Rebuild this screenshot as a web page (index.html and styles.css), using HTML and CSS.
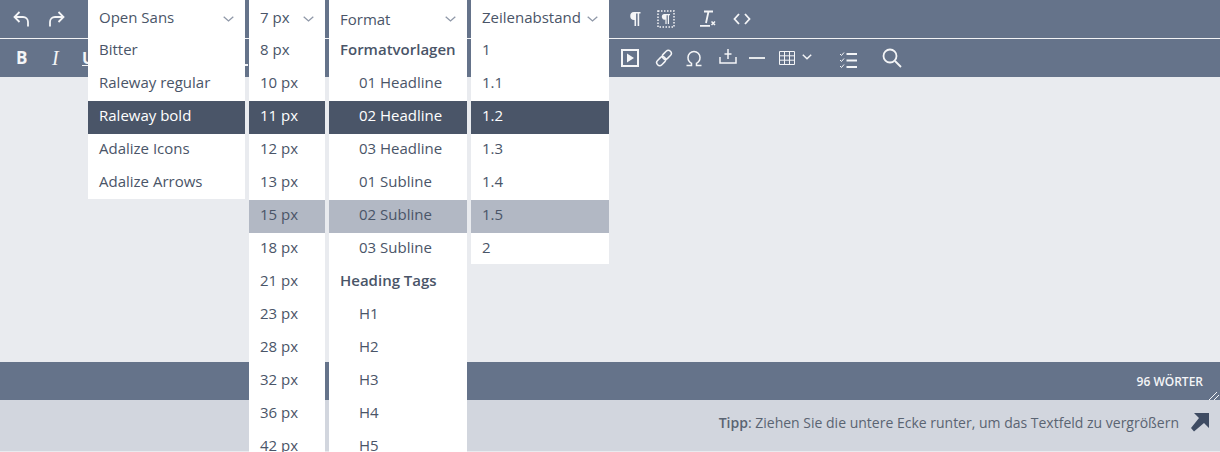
FILE: index.html
```html
<!DOCTYPE html>
<html lang="de">
<head>
<meta charset="utf-8">
<title>Editor</title>
<link rel="stylesheet" href="styles.css">
</head>
<body>
<div class="editor">
  <div class="toolbar row-one">
    <svg class="ico undo" viewBox="0 0 18 18"><path d="M7.500 2 2.500 7l5 5M2.500 7h8.500a5 5 0 0 1 5 5v4.500"/></svg>
    <svg class="ico redo" viewBox="0 0 18 18"><path d="M10.500 2l5 5-5 5M15.500 7H7a5 5 0 0 0-5 5v4.500"/></svg>
    <svg class="ico pilcrow" viewBox="0 0 12 14"><path class="solid" d="M5 0h6.500v1.600h-1.300V14H8.600V1.600H7.100V14H5.500V8A4 4 0 0 1 5 0z"/></svg>
    <svg class="ico blocks" viewBox="0 0 18 18"><rect class="dots" x="1" y="1" width="16" height="16"/><path class="solid" d="M7 4h6v1.200h-1V14h-1.200V5.200H9.600V14H8.400V9.500A2.800 2.800 0 0 1 7 4z"/></svg>
    <svg class="ico clear" viewBox="0 0 16 18"><path d="M4 1.500h9M8.500 1.500 6 13M0 15.800h10"/><path class="thin" d="m11.500 11.500 3.500 3.500m0-3.500-3.500 3.500"/></svg>
    <svg class="ico code" viewBox="0 0 18 12"><path d="M6 1 1.500 6 6 11M12 1l4.500 5L12 11"/></svg>
  </div>
  <div class="toolbar row-two">
    <span class="glyph bold">B</span>
    <span class="glyph italic">I</span>
    <span class="glyph under">U</span>
    <span class="notch"></span>
    <svg class="ico play" viewBox="0 0 18 18"><rect class="box" x="1" y="1" width="16" height="16"/><path class="solid" d="M6 4.500 13 9l-7 4.500z"/></svg>
    <svg class="ico link" viewBox="0 0 18 18"><rect class="thin" x="7" y="2.800" width="10" height="6" rx="3" transform="rotate(-45 12 6)"/><rect class="thin" x="1" y="9.200" width="10" height="6" rx="3" transform="rotate(-45 6 12)"/></svg>
    <svg class="ico omega" viewBox="0 0 18 18"><path class="thin" d="M1.500 16.500h5v-2.200A6.500 6.500 0 0 1 3 8.500a6 6 0 0 1 12 0 6.500 6.500 0 0 1-3.500 5.800v2.200h5"/></svg>
    <svg class="ico upload" viewBox="0 0 18 18"><path class="thin" d="M1 8v6h16V8M9 0v10M5.500 5h7"/></svg>
    <svg class="ico rule" viewBox="0 0 16 4"><path d="M0 2h16"/></svg>
    <svg class="ico table" viewBox="0 0 16 14"><path class="hair" d="M.5.500h15v13H.500zM.5 4.800h15M.5 9.200h15M5.500.5v13M10.500.5v13"/></svg>
    <svg class="ico tchev" viewBox="0 0 10 6"><path class="thin" d="m.8.800 4.200 4 4.200-4"/></svg>
    <svg class="ico check" viewBox="0 0 18 18"><path class="hair" d="m1 3 1.500 1.500L5 1.500M1 9l1.500 1.500L5 7.500M1 15l1.500 1.500L5 13.500"/><path d="M7.500 3H18M7.500 9.500H18M7.500 16H18"/></svg>
    <svg class="ico search" viewBox="0 0 20 20"><circle cx="8" cy="8" r="6.500"/><path d="m13 13 6 6"/></svg>
  </div>
  <div class="canvas"></div>
  <div class="status">
    <span class="words">96 WÖRTER</span>
    <svg class="grip" viewBox="0 0 10 8"><path d="M0 8 8 0M5 8l5-5"/></svg>
  </div>
  <div class="tip">
    <span class="tip-text"><b>Tipp</b>: Ziehen Sie die untere Ecke runter, um das Textfeld zu vergrößern</span>
    <svg class="arrow" viewBox="0 0 19 19"><path d="M3 0H18V15L13 10 3 18.500 0 15 8 5z"/></svg>
  </div>

  <div class="menus">
    <div class="menu m-font">
      <div class="head"><span>Open Sans</span><svg class="chev" viewBox="0 0 11 6"><path d="m.7.700 4.800 4.300L10.300.7"/></svg></div>
      <div class="item">Bitter</div>
      <div class="item">Raleway regular</div>
      <div class="item on">Raleway bold</div>
      <div class="item">Adalize Icons</div>
      <div class="item">Adalize Arrows</div>
    </div>
    <div class="menu m-size">
      <div class="head"><span>7 px</span><svg class="chev" viewBox="0 0 11 6"><path d="m.7.700 4.800 4.300L10.300.7"/></svg></div>
      <div class="item">8 px</div>
      <div class="item">10 px</div>
      <div class="item on">11 px</div>
      <div class="item">12 px</div>
      <div class="item">13 px</div>
      <div class="item hover">15 px</div>
      <div class="item">18 px</div>
      <div class="item">21 px</div>
      <div class="item">23 px</div>
      <div class="item">28 px</div>
      <div class="item">32 px</div>
      <div class="item">36 px</div>
      <div class="item">42 px</div>
    </div>
    <div class="menu m-format">
      <div class="head low"><span>Format</span><svg class="chev" viewBox="0 0 11 6"><path d="m.7.700 4.800 4.300L10.300.7"/></svg></div>
      <div class="item title">Formatvorlagen</div>
      <div class="item sub">01 Headline</div>
      <div class="item sub on">02 Headline</div>
      <div class="item sub">03 Headline</div>
      <div class="item sub">01 Subline</div>
      <div class="item sub hover">02 Subline</div>
      <div class="item sub">03 Subline</div>
      <div class="item title">Heading Tags</div>
      <div class="item sub">H1</div>
      <div class="item sub">H2</div>
      <div class="item sub">H3</div>
      <div class="item sub">H4</div>
      <div class="item sub">H5</div>
    </div>
    <div class="menu m-line">
      <div class="head"><span>Zeilenabstand</span><svg class="chev" viewBox="0 0 11 6"><path d="m.7.700 4.800 4.300L10.300.7"/></svg></div>
      <div class="item">1</div>
      <div class="item">1.1</div>
      <div class="item on">1.2</div>
      <div class="item">1.3</div>
      <div class="item">1.4</div>
      <div class="item hover">1.5</div>
      <div class="item">2</div>
    </div>
  </div>
</div>
</body>
</html>
```
FILE: styles.css
```css
* { box-sizing: border-box; }
html, body { margin: 0; padding: 0; overflow: hidden; }
body { font-family: "Open Sans", sans-serif; font-size: 15px; color: #4a5568; }

.editor { position: relative; width: 1220px; height: 452px; overflow: hidden; display: flex; flex-direction: column; background: #e9ebef; }

.toolbar { display: flex; align-items: center; background: #65738a; color: #fff; flex: none; }
.row-one { height: 38px; padding-bottom: 1px; }
.row-two { height: 39px; border-top: 1px solid #f2f3f5; }

.ico { display: block; flex: none; fill: none; stroke: #f4f5f7; stroke-width: 1.8; }
.ico .solid { fill: #f4f5f7; stroke: none; }
.ico .thin { stroke-width: 1.500; }
.ico .hair { stroke-width: 1; }
.ico .dots { stroke-width: 1.500; stroke-dasharray: 1.500 1.500; }
.ico .box { stroke-width: 2; }

.undo { width: 18px; height: 18px; margin-left: 12px; }
.redo { width: 18px; height: 18px; margin-left: 18px; }
.pilcrow { width: 12px; height: 14px; margin-left: 563px; }
.blocks { width: 18px; height: 18px; margin-left: 16px; }
.clear { width: 16px; height: 18px; margin-left: 25px; }
.code { width: 18px; height: 12px; margin-left: 17px; }

.glyph { display: block; flex: none; color: #f4f5f7; line-height: 20px; }
.bold { width: 13px; margin-left: 16px; font-family: "Open Sans", sans-serif; font-weight: 700; font-size: 17px; margin-bottom: 1px; }
.italic { width: 8px; margin-left: 23px; font-family: "Liberation Serif", serif; font-style: italic; font-size: 20px; }
.under { width: 12px; margin-left: 22px; font-weight: 700; font-size: 16px; text-decoration: underline; }
.notch { display: block; flex: none; width: 3px; height: 2px; margin: 14px 0 0 151px; background: #f4f5f7; }

.play { width: 18px; height: 18px; margin-left: 373px; }
.link { width: 18px; height: 18px; margin-left: 16px; }
.omega { width: 18px; height: 18px; margin-left: 12px; }
.upload { width: 18px; height: 18px; margin-left: 16px; }
.rule { width: 16px; height: 4px; margin-left: 12px; }
.table { width: 16px; height: 14px; margin-left: 14px; margin-bottom: 1px; }
.tchev { width: 10px; height: 6px; margin-left: 7px; margin-bottom: 2px; }
.check { width: 18px; height: 18px; margin-left: 27px; margin-top: 4px; }
.search { width: 20px; height: 20px; margin-left: 25px; margin-bottom: 1px; }

.canvas { flex: 1 1 auto; }

.status { flex: none; height: 38px; background: #65738a; color: #f4f5f7; position: relative; display: flex; justify-content: flex-end; align-items: center; padding-right: 17px; }
.words { font-size: 12px; font-weight: 600; margin-top: 1px; }
.grip { position: absolute; right: 1px; bottom: 0; width: 10px; height: 8px; fill: none; stroke: #f4f5f7; stroke-width: 1; }

.tip { flex: none; height: 52px; background: #d2d6de; border-bottom: 1px solid #e9ebef; display: flex; justify-content: flex-end; align-items: center; padding: 0 10px 6px 0; color: #5a6472; font-size: 14px; }
.tip b { font-weight: 600; }
.arrow { width: 19px; height: 19px; margin-left: 12px; fill: #3f4c63; }

.menus { position: absolute; left: 88px; top: 0; display: flex; gap: 4px; align-items: flex-start; }
.menu { background: #fff; }
.m-font { width: 157px; }
.m-size { width: 76px; }
.m-format { width: 138px; }
.m-line { width: 138px; }

.head { height: 35px; padding: 0 11px 2px; display: flex; align-items: center; justify-content: space-between; }
.head.low { padding: 3px 11px 0; }
.chev { width: 11px; height: 6px; flex: none; margin-top: 5px; fill: none; stroke: #8f98a8; stroke-width: 1.300; }
.low .chev { margin-top: 0; }

.item { height: 33px; padding: 0 11px 6px; display: flex; align-items: center; white-space: nowrap; }
.sub { padding-left: 30px; }
.title { font-weight: 600; }
.on { background: #4a5568; color: #fff; }
.hover { background: #b2b8c4; }
.m-font .item:last-child { height: 32px; padding-bottom: 4px; }
.m-line .item:last-child { height: 31px; padding-bottom: 4px; }
```
